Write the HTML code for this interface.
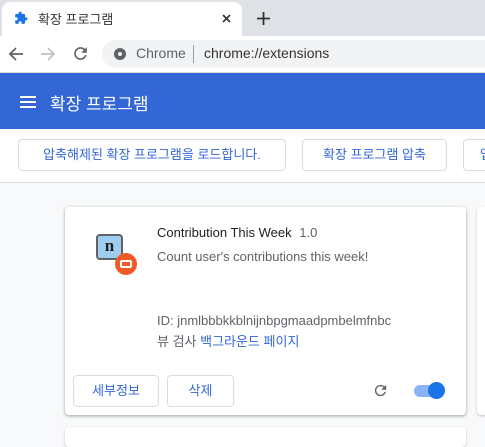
<!DOCTYPE html><html><head><style>
body{margin:0;width:485px;height:433px;overflow:hidden;background:#f8f9fa;font-family:"Liberation Sans","Noto Sans CJK KR",sans-serif;position:relative}
div{position:absolute;box-sizing:border-box}
.btn{border:1px solid #dadce0;border-radius:4px;background:#fff;color:#3367d6;font-size:13px;text-align:center;line-height:30px}
</style></head><body>
<div style="left:0;top:0;width:485px;height:36px;background:#dee1e6"></div>
<div style="left:2px;top:2px;width:240px;height:36px;background:#fff;border-radius:8px 8px 0 0"></div>
<svg style="position:absolute;left:14px;top:11px" width="14" height="14" viewBox="0 0 24 24"><path fill="#1a73e8" d="M20.5 11H19V7c0-1.1-.9-2-2-2h-4V3.5a2.5 2.5 0 0 0-5 0V5H4c-1.1 0-2 .9-2 2v3.8h1.5a2.7 2.7 0 0 1 0 5.4H2V20c0 1.1.9 2 2 2h3.8v-1.5a2.7 2.7 0 0 1 5.4 0V22H17c1.1 0 2-.9 2-2v-4h1.5a2.5 2.5 0 0 0 0-5z"/></svg>
<div style="left:38px;top:9px;font-size:13px;color:#333">확장 프로그램</div>
<svg style="position:absolute;left:222px;top:14px" width="9" height="9" viewBox="0 0 9 9"><path d="M1 1L8 8M8 1L1 8" stroke="#333" stroke-width="1.6"/></svg>
<svg style="position:absolute;left:257px;top:12px" width="13" height="13" viewBox="0 0 13 13"><path d="M6.5 0V13M0 6.5H13" stroke="#333" stroke-width="1.8"/></svg>
<div style="left:0;top:36px;width:485px;height:37px;background:#fff;border-bottom:1px solid #dadce0"></div>
<svg style="position:absolute;left:8px;top:46px" width="16" height="16" viewBox="0 0 16 16"><path d="M15 8H2M8 2L2 8l6 6" stroke="#5f6368" stroke-width="1.8" fill="none"/></svg>
<svg style="position:absolute;left:40px;top:46px" width="16" height="16" viewBox="0 0 16 16"><path d="M1 8H14M8 2l6 6-6 6" stroke="#bdc1c6" stroke-width="1.8" fill="none"/></svg>
<svg style="position:absolute;left:71px;top:44px" width="19" height="19" viewBox="0 0 24 24"><path fill="#5f6368" d="M17.65 6.35A7.95 7.95 0 0 0 12 4a8 8 0 1 0 7.73 10h-2.08A6 6 0 1 1 12 6c1.66 0 3.14.69 4.22 1.78L13 11h7V4z"/></svg>
<div style="left:102px;top:40px;width:400px;height:28px;border-radius:14px;background:#f1f3f4"></div>
<div style="left:114px;top:48px;width:12px;height:12px;border-radius:50%;background:#5f6368"></div>
<div style="left:118px;top:52px;width:4px;height:4px;border-radius:50%;background:#f1f3f4"></div>
<div style="left:136px;top:45px;font-size:14px;color:#5f6368">Chrome</div>
<div style="left:193px;top:45px;width:1px;height:18px;background:#9aa0a6"></div>
<div style="left:204px;top:45px;font-size:14px;color:#333">chrome://extensions</div>
<div style="left:0;top:73px;width:485px;height:56px;background:#3367d6"></div>
<div style="left:20px;top:96px;width:16px;height:2px;background:#fff;box-shadow:0 5px 0 #fff,0 10px 0 #fff"></div>
<div style="left:50px;top:90px;font-size:17px;color:#fff">확장 프로그램</div>
<div style="left:0;top:129px;width:485px;height:54px;background:#fff;border-bottom:1px solid #dadce0"></div>
<div class="btn" style="left:18px;top:139px;width:268px;height:32px">압축해제된 확장 프로그램을 로드합니다.</div>
<div class="btn" style="left:302px;top:139px;width:145px;height:32px">확장 프로그램 압축</div>
<div class="btn" style="left:463px;top:139px;width:60px;height:32px;text-align:left;padding-left:16px">업</div>
<div style="left:65px;top:207px;width:401px;height:208px;background:#fff;border-radius:4px;box-shadow:0 1px 2px rgba(60,64,67,.3),0 1px 3px 1px rgba(60,64,67,.15)"></div>
<div style="left:477px;top:207px;width:20px;height:208px;background:#fff;border-radius:4px;box-shadow:0 1px 2px rgba(60,64,67,.3)"></div>
<div style="left:65px;top:427px;width:401px;height:20px;background:#fff;border-radius:4px;box-shadow:0 1px 2px rgba(60,64,67,.3)"></div>
<div style="left:96px;top:234px;width:27px;height:26px;background:#9fcdef;border:2px solid #5f6368;border-radius:4px;font:bold 17px 'Liberation Serif',serif;text-align:center;line-height:20px;color:#222">n</div>
<div style="left:115px;top:253px;width:22px;height:22px;border-radius:50%;background:#f05a28"></div>
<div style="left:120px;top:260px;width:12px;height:8px;border:2px solid #fff;border-radius:2px"></div>
<div style="left:157px;top:225px;font-size:13px;color:#202124">Contribution This Week <span style="color:#5f6368;margin-left:4px">1.0</span></div>
<div style="left:157px;top:249px;font-size:13px;color:#5f6368">Count user's contributions this week!</div>
<div style="left:157px;top:313px;font-size:13px;color:#5f6368">ID: jnmlbbbkkblnijnbpgmaadpmbelmfnbc</div>
<div style="left:157px;top:331px;font-size:13px;color:#5f6368">뷰 검사 <span style="color:#3367d6">백그라운드 페이지</span></div>
<div class="btn" style="left:73px;top:375px;width:86px;height:32px">세부정보</div>
<div class="btn" style="left:167px;top:375px;width:67px;height:32px">삭제</div>
<svg style="position:absolute;left:372px;top:382px" width="17" height="17" viewBox="0 0 24 24"><path fill="#5f6368" d="M17.65 6.35A7.95 7.95 0 0 0 12 4a8 8 0 1 0 7.73 10h-2.08A6 6 0 1 1 12 6c1.66 0 3.14.69 4.22 1.78L13 11h7V4z"/></svg>
<div style="left:414px;top:385px;width:30px;height:12px;border-radius:6px;background:#8ab4f8"></div>
<div style="left:428px;top:382px;width:17px;height:17px;border-radius:50%;background:#1a73e8"></div>
</body></html>
